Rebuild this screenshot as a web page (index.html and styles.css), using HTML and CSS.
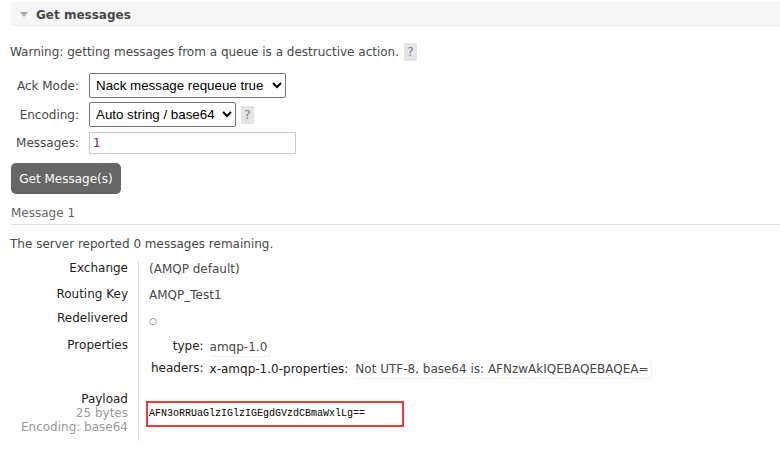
FILE: index.html
```html
<!DOCTYPE html>
<html>
<head>
<meta charset="utf-8">
<link rel="stylesheet" href="styles.css">
</head>
<body>
<div class="section">
  <div class="section-head"><span class="tri"></span><h2>Get messages</h2></div>
  <p class="warning">Warning: getting messages from a queue is a destructive action. <span class="help">?</span></p>
  <div class="form">
    <label class="flabel">Ack Mode:</label>
    <div class="fctl">
      <select class="sel sel-ack"><option>Nack message requeue true</option></select>
    </div>
    <label class="flabel">Encoding:</label>
    <div class="fctl">
      <select class="sel sel-enc"><option>Auto string / base64</option></select>
      <span class="help">?</span>
    </div>
    <label class="flabel">Messages:</label>
    <div class="fctl">
      <input class="inp" type="text" value="1">
    </div>
  </div>
  <button class="btn">Get Message(s)</button>
  <h3 class="msg-title">Message 1</h3>
  <p class="remaining">The server reported 0 messages remaining.</p>
  <table class="facts">
    <tr class="r-ex"><th>Exchange</th><td>(AMQP default)</td></tr>
    <tr class="r-rk"><th>Routing Key</th><td>AMQP_Test1</td></tr>
    <tr class="r-rd"><th>Redelivered</th><td><span class="circle">○</span></td></tr>
    <tr><th>Properties</th><td>
      <table class="props">
        <tr><th>type:</th><td><span class="pv">amqp-1.0</span></td></tr>
        <tr><th>headers:</th><td><span class="hk">x-amqp-1.0-properties:</span><span class="pv">Not UTF-8, base64 is: AFNzwAkIQEBAQEBAQEA=</span></td></tr>
      </table>
    </td></tr>
    <tr class="payload-row"><th>Payload<br><span class="sub">25 bytes</span><br><span class="sub">Encoding: base64</span></th><td><div class="payload">AFN3oRRUaGlzIGlzIGEgdGVzdCBmaWxlLg==</div></td></tr>
  </table>
</div>
</body>
</html>
```
FILE: styles.css
```css
html, body { margin: 0; padding: 0; background: #fff; }
body { font-family: "DejaVu Sans", Verdana, sans-serif; font-size: 12px; color: #484848; }

.section { padding: 2px 0 0 0; }
.section-head { margin-left: 11px; height: 25px; background: #f6f6f6; display: flex; align-items: center; }
.tri { width: 0; height: 0; border-left: 4px solid transparent; border-right: 4px solid transparent; border-top: 5px solid #aaa; margin-left: 9px; margin-right: 8px; }
.section-head h2 { margin: 0; font-size: 12px; font-weight: bold; color: #484848; }

.warning { margin: 16px 0 0 10px; line-height: 18px; display: flex; align-items: center; }
.help { display: inline-block; width: 13px; height: 18px; line-height: 18px; text-align: center; background: #e4e4e4; color: #7a7a9a; margin-left: 5px; }

.form { display: grid; grid-template-columns: 79px auto; column-gap: 10px; row-gap: 4px; margin-top: 12px; align-items: center; justify-content: start; }
.flabel { text-align: right; font-size: 12px; }
.fctl { display: flex; align-items: center; }
.sel { font-family: "Liberation Sans", Arial, sans-serif; font-size: 13.33px; height: 25px; color: #000; border: 1px solid #767676; border-radius: 2px; background: #fff; padding: 0 2px; }
.sel-ack { width: 197px; }
.sel-enc { width: 147px; }
.inp { width: 207px; height: 22px; box-sizing: border-box; border: 1px solid #ccc; font-family: "DejaVu Sans", Verdana, sans-serif; font-size: 12px; color: #6b2d6b; padding: 0 3px; margin-top: 1px; }

.btn { display: block; margin: 9px 0 0 11px; width: 110px; height: 31px; background: #666; color: #fff; border: none; border-radius: 5px; font-family: "DejaVu Sans", Verdana, sans-serif; font-size: 12px; padding: 0; }

.msg-title { margin: 12px 0 0 11px; font-size: 12px; font-weight: normal; color: #666; padding-bottom: 4px; border-bottom: 1px solid #ddd; line-height: 14px; }
.remaining { margin: 12px 0 0 10px; line-height: 14px; }

.facts { border-collapse: collapse; margin: 10px 0 0 0; }
.facts > tbody > tr > th { width: 128px; text-align: right; font-weight: normal; color: #222; padding: 0 10px 0 0; border-right: 1px solid #ddd; vertical-align: top; height: 25px; line-height: 14px; }
.facts > tbody > tr > td { padding: 0 0 0 10px; vertical-align: top; line-height: 14px; padding-top: 1px; }
.facts > tbody > tr.r-ex > th { height: 26px; }
.facts > tbody > tr.r-rk > th { height: 24px; }
.facts > tbody > tr.r-rd > th { height: 27px; }
.circle { font-size: 9px; color: #666; position: relative; top: 1px; }
.props { border-collapse: collapse; margin-left: 2px; }
.props th { text-align: right; font-weight: normal; color: #222; padding: 0 6px 0 0; vertical-align: top; height: 22px; }
.props td { padding: 0; vertical-align: top; }
.pv { display: inline-block; border-bottom: 1px dotted #e4e4e4; border-right: 1px dotted #e4e4e4; border-radius: 3px; padding: 1px 2px 2px 0; color: #484848; }
.hk { color: #222; margin-right: 7px; }
.facts > tbody > tr.payload-row > th { padding-top: 9px; padding-bottom: 7px; }
.sub { color: #999; }
.facts > tbody > tr.payload-row > td { padding-top: 18px; padding-left: 7px; }
.payload { width: 253px; height: 22px; border: 2px solid #f03a3a; font-family: "Liberation Mono", "Courier New", monospace; font-size: 10px; color: #000; line-height: 22px; padding: 0 0 0 1px; }
```
